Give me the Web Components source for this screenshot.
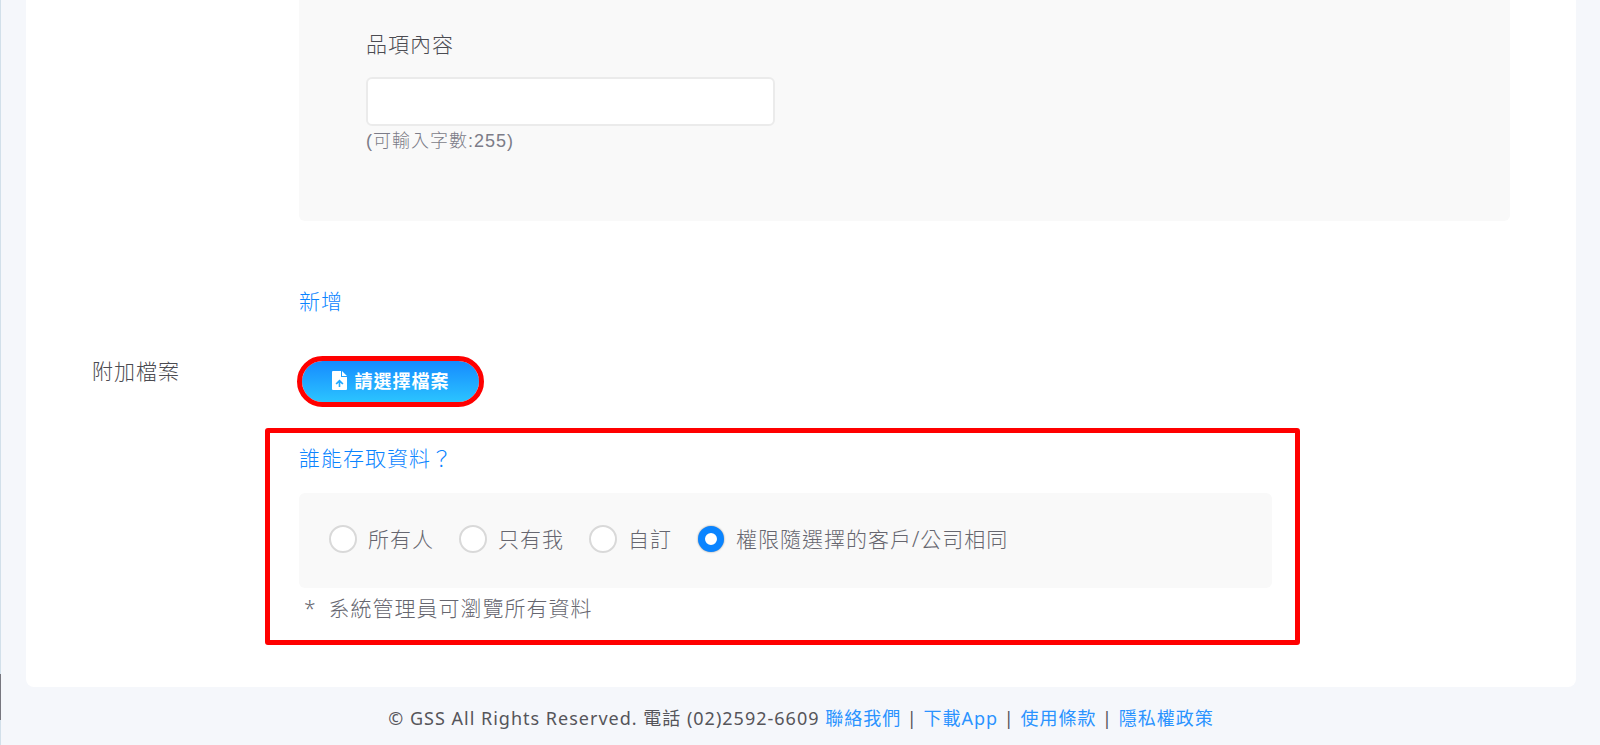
<!DOCTYPE html>
<html lang="zh-Hant">
<head>
<meta charset="utf-8">
<meta name="viewport" content="width=device-width, initial-scale=1">
<title>GSS</title>
<style>
body {
  margin: 0;
  background: #f5f7fb;
  color: #4b4b51;
  font: 300 21px/30px "Noto Sans", "Noto Sans CJK TC", sans-serif;
  letter-spacing: 1px;
}
</style>
</head>
<body>
<app-page>
  <form-card>
    <field-panel></field-panel>
    <form-row>
      <text-link>新增</text-link>
    </form-row>
    <form-row>
      <span slot="label">附加檔案</span>
      <file-button>請選擇檔案</file-button>
    </form-row>
    <form-row>
      <access-section></access-section>
    </form-row>
  </form-card>
  <site-footer></site-footer>
</app-page>
<script>
function define(name, html) {
  const template = document.createElement('template');
  template.innerHTML = html;
  customElements.define(name, class extends HTMLElement {
    constructor() {
      super();
      this.attachShadow({ mode: 'open' }).append(template.content.cloneNode(true));
    }
  });
}

define('app-page', `
<style>
  :host { display: grid; grid-template-columns: 1px minmax(0, 1fr); min-height: 100vh; }
  .rail { display: flex; flex-direction: column; justify-content: flex-end; background: #d2e0ea; padding-bottom: 25px; }
  .thumb { height: 46px; background: #77777f; }
  main { padding: 0 24px 0 25px; display: flex; flex-direction: column; }
</style>
<div class="rail" aria-hidden="true"><div class="thumb"></div></div>
<main><slot></slot></main>`);

define('form-card', `
<style>
  :host { display: flex; flex-direction: column; background: #fff; border-radius: 0 0 8px 8px; padding: 0 66px 64px 66px; }
</style>
<slot></slot>`);

define('form-row', `
<style>
  :host { display: grid; grid-template-columns: 207px minmax(0, 1fr); align-items: start; margin-top: 40px; }
  .content { grid-column: 2; grid-row: 1; }
</style>
<div><slot name="label"></slot></div>
<div class="content"><slot></slot></div>`);

define('field-panel', `
<style>
  :host { display: flex; flex-direction: column; align-items: flex-start; box-sizing: border-box; margin: 0 0 25px 207px; padding: 29px 67px 65px; background: #f9f9f9; border-radius: 0 0 6px 6px; }
  label { margin-bottom: 18px; }
  input { box-sizing: border-box; width: 100%; max-width: 409px; height: 49px; border: 2px solid #ebebeb; border-radius: 6px; background: #fff; padding: 0 12px; font: inherit; color: inherit; outline: none; }
  small { font: 300 18px/30px "Liberation Sans", "Noto Sans CJK TC", sans-serif; color: #7c7c88; }
</style>
<label for="item">品項內容</label>
<input id="item" type="text" maxlength="255" aria-describedby="hint">
<small id="hint">(可輸入字數:255)</small>`);

define('text-link', `
<style>
  :host { display: block; }
  a { color: #0a84ff; text-decoration: none; }
</style>
<a href="#"><slot></slot></a>`);

define('file-button', `
<style>
  :host { display: block; margin-left: -2px; }
  button { display: flex; align-items: center; justify-content: center; gap: 8px; box-sizing: border-box; width: 187px; height: 51px; padding: 0 0 2px; border: 5px solid #f00; border-radius: 26px; background: linear-gradient(#168aff, #2bc4ff) padding-box; color: #fff; font: 700 18px/28px "Noto Sans", "Noto Sans CJK TC", sans-serif; letter-spacing: inherit; }
  svg { width: 15px; height: 19px; flex: none; }
</style>
<button type="button">
  <svg viewBox="0 0 15 19" aria-hidden="true"><path fill="#fff" fill-rule="evenodd" d="M1 0h8v5.500q0 .5.5.5H15v12q0 1-1 1H1q-1 0-1-1V1Q0 0 1 0zM10 0l5 5h-5zM7.500 8.500L3.500 12.500l1.200 1.100 2-1.900V16h1.600v-4.300l2 1.900 1.200-1.100z"/></svg>
  <slot></slot>
</button>`);

define('access-section', `
<style>
  :host { display: block; position: relative; color: #66666f; margin-top: -4px; }
  .mark { position: absolute; inset: -15px 210px -22px -34px; border: 5px solid #f00; border-radius: 3px; pointer-events: none; }
  h2 { margin: 0 0 20px; font: inherit; color: #0a84ff; }
  .options { display: flex; flex-wrap: wrap; align-items: center; gap: 25px; margin-right: 238px; padding: 31px 30px 34px; background: #f9f9f9; border-radius: 6px; }
  label { display: flex; align-items: center; gap: 11px; }
  input { appearance: none; box-sizing: border-box; width: 28px; height: 28px; margin: 0; flex: none; border: 2px solid #d9d9d9; border-radius: 50%; background: #fff; }
  input:checked { width: 26px; height: 26px; margin: 0 1px; border: 7px solid #0a84ff; box-shadow: 0 0 2px #888; }
  p { display: flex; gap: 12px; margin: 5px 0 0 5px; }
</style>
<h2 id="who">誰能存取資料？</h2>
<div class="options" role="radiogroup" aria-labelledby="who">
  <label><input type="radio" name="access">所有人</label>
  <label><input type="radio" name="access">只有我</label>
  <label><input type="radio" name="access">自訂</label>
  <label><input type="radio" name="access" checked>權限隨選擇的客戶/公司相同</label>
</div>
<p><span>*</span><span>系統管理員可瀏覽所有資料</span></p>
<div class="mark" aria-hidden="true"></div>`);

define('site-footer', `
<style>
  :host { display: block; padding: 16px 0 11px; text-align: center; font-size: 18px; font-weight: 400; color: #55555a; }
  a { color: #2a93ff; text-decoration: none; }
</style>
<footer>© GSS All Rights Reserved. 電話 (02)2592-6609 <a href="#">聯絡我們</a> | <a href="#">下載App</a> | <a href="#">使用條款</a> | <a href="#">隱私權政策</a></footer>`);
</script>
</body>
</html>
